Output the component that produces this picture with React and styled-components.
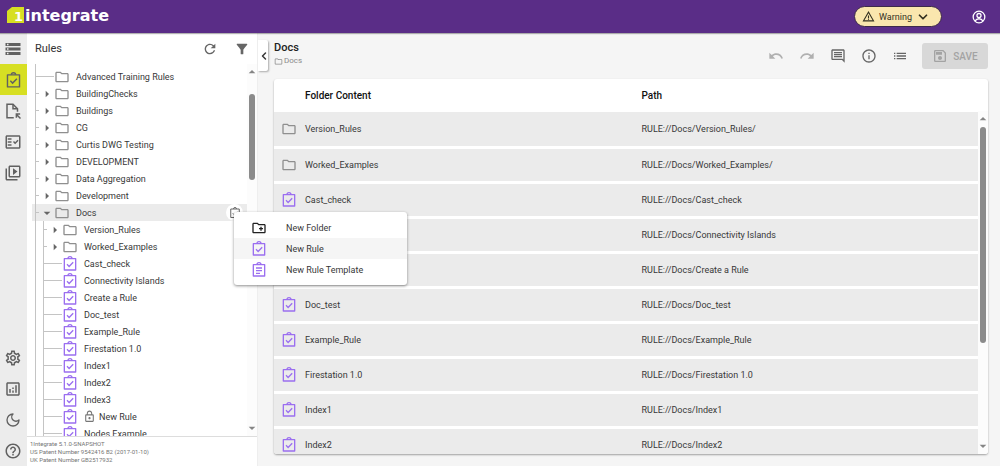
import React from 'react';
import styled, { createGlobalStyle } from 'styled-components';
import {
  MdStorage,
  MdOutlineFactCheck,
  MdOutlineVideoLibrary,
  MdOutlineSettings,
  MdOutlineAnalytics,
  MdHelpOutline,
  MdRefresh,
  MdFilterAlt,
  MdOutlineFolder,
  MdOutlineLock,
  MdOutlineCreateNewFolder,
  MdUndo,
  MdRedo,
  MdOutlineComment,
  MdInfoOutline,
  MdList,
  MdOutlineSave,
  MdWarningAmber,
  MdArrowRight,
  MdArrowDropDown,
  MdArrowDropUp,
} from 'react-icons/md';
import { LuMoon, LuChevronDown, LuChevronLeft } from 'react-icons/lu';

const tree = [
  { name: 'Advanced Training Rules', kind: 'folder', leaf: true },
  { name: 'BuildingChecks', kind: 'folder' },
  { name: 'Buildings', kind: 'folder' },
  { name: 'CG', kind: 'folder' },
  { name: 'Curtis DWG Testing', kind: 'folder' },
  { name: 'DEVELOPMENT', kind: 'folder' },
  { name: 'Data Aggregation', kind: 'folder' },
  { name: 'Development', kind: 'folder' },
  { name: 'Docs', kind: 'folder', open: true },
  { name: 'Version_Rules', kind: 'folder', nested: true },
  { name: 'Worked_Examples', kind: 'folder', nested: true },
  { name: 'Cast_check', kind: 'rule', nested: true },
  { name: 'Connectivity Islands', kind: 'rule', nested: true },
  { name: 'Create a Rule', kind: 'rule', nested: true },
  { name: 'Doc_test', kind: 'rule', nested: true },
  { name: 'Example_Rule', kind: 'rule', nested: true },
  { name: 'Firestation 1.0', kind: 'rule', nested: true },
  { name: 'Index1', kind: 'rule', nested: true },
  { name: 'Index2', kind: 'rule', nested: true },
  { name: 'Index3', kind: 'rule', nested: true },
  { name: 'New Rule', kind: 'rule', nested: true, locked: true },
  { name: 'Nodes Example', kind: 'rule', nested: true },
];

const content = [
  { name: 'Version_Rules', kind: 'folder', path: 'RULE://Docs/Version_Rules/' },
  { name: 'Worked_Examples', kind: 'folder', path: 'RULE://Docs/Worked_Examples/' },
  { name: 'Cast_check', kind: 'rule', path: 'RULE://Docs/Cast_check' },
  { name: 'Connectivity Islands', kind: 'rule', path: 'RULE://Docs/Connectivity Islands', covered: true },
  { name: 'Create a Rule', kind: 'rule', path: 'RULE://Docs/Create a Rule', covered: true },
  { name: 'Doc_test', kind: 'rule', path: 'RULE://Docs/Doc_test' },
  { name: 'Example_Rule', kind: 'rule', path: 'RULE://Docs/Example_Rule' },
  { name: 'Firestation 1.0', kind: 'rule', path: 'RULE://Docs/Firestation 1.0' },
  { name: 'Index1', kind: 'rule', path: 'RULE://Docs/Index1' },
  { name: 'Index2', kind: 'rule', path: 'RULE://Docs/Index2' },
];

function ClipboardIcon({ size = 16, color = 'currentColor', lines }) {
  return (
    <svg width={size} height={size} viewBox="0 0 24 24" fill="none" stroke={color} strokeWidth="2">
      <path d="M3.500 4h17v17h-17z" strokeLinejoin="round" />
      <path d="M9 4a3 3 0 0 1 6 0" />
      {lines ? <path d="M7.500 9h9M7.500 13h9M7.500 17h6" /> : <path d="M7.500 12.500l3.200 3.200L16.800 9.500" />}
    </svg>
  );
}

function KindIcon({ kind }) {
  return kind === 'folder' ? <MdOutlineFolder size={16} color="#8f8f8f" /> : <ClipboardIcon color="#9b6ff0" />;
}

function PageExportIcon() {
  return (
    <svg width="18" height="18" viewBox="0 0 24 24" fill="none" stroke="currentColor" strokeWidth="2">
      <path d="M13 21H4V3h8l6 6v4" />
      <path d="M12 3v6h6" />
      <path d="M22 22l-5-5M16.500 21v-5h5" />
    </svg>
  );
}

function Logo() {
  return (
    <Brand href="#" aria-label="1integrate home">
      <svg width="106" height="22" viewBox="0 0 106 22">
        <path d="M5 1h12v16H0V5z" fill="#d7df23" />
        <LogoText x="7" y="15" $size={13}>1</LogoText>
        <LogoText x="18" y="15" $size={16}>integrate</LogoText>
      </svg>
    </Brand>
  );
}

function Menu() {
  return (
    <MenuPanel role="menu">
      <MenuItem role="menuitem"><MdOutlineCreateNewFolder size={16} color="#222" />New Folder</MenuItem>
      <MenuItem role="menuitem" $hover><ClipboardIcon color="#9b6ff0" />New Rule</MenuItem>
      <MenuItem role="menuitem"><ClipboardIcon color="#9b6ff0" lines />New Rule Template</MenuItem>
    </MenuPanel>
  );
}

function App() {
  return (
    <Page>
      <GlobalStyle />
      <Header>
        <Logo />
        <WarningButton>
          <MdWarningAmber size={13} />
          Warning
          <LuChevronDown size={14} strokeWidth={3} />
        </WarningButton>
        <AccountButton aria-label="Account">
          <svg width="14" height="14" viewBox="0 0 24 24" fill="none" stroke="currentColor" strokeWidth="2.200">
            <circle cx="12" cy="12" r="10" />
            <circle cx="12" cy="9.500" r="3.500" />
            <path d="M5 19c2-3 4.500-4 7-4s5 1 7 4" />
          </svg>
        </AccountButton>
      </Header>

      <Body>
        <Rail>
          <RailButton aria-label="Data stores"><MdStorage size={18} /></RailButton>
          <RailButton aria-label="Rules" $active><ClipboardIcon size={17} /></RailButton>
          <RailButton aria-label="Actions"><PageExportIcon /></RailButton>
          <RailButton aria-label="Action maps"><MdOutlineFactCheck size={18} /></RailButton>
          <RailButton aria-label="Sessions"><MdOutlineVideoLibrary size={18} /></RailButton>
          <Spacer />
          <RailButton aria-label="Settings"><MdOutlineSettings size={18} /></RailButton>
          <RailButton aria-label="Reports"><MdOutlineAnalytics size={18} /></RailButton>
          <RailButton aria-label="Dark mode"><LuMoon size={16} /></RailButton>
          <RailButton aria-label="Help"><MdHelpOutline size={18} /></RailButton>
        </Rail>

        <Sidebar>
          <SidebarHead>
            <SidebarTitle>Rules</SidebarTitle>
            <button aria-label="Refresh"><MdRefresh size={16} /></button>
            <button aria-label="Filter"><MdFilterAlt size={16} /></button>
          </SidebarHead>
          <TreeArea>
            <Tree>
              {tree.map((item) => (
                <TreeRow key={item.name} $nested={item.nested} $selected={item.open}>
                  <Branch $long={item.leaf || item.kind === 'rule'} />
                  {item.kind === 'folder' && !item.leaf && (
                    <Arrow>{item.open ? <MdArrowDropDown size={16} /> : <MdArrowRight size={16} />}</Arrow>
                  )}
                  <KindIcon kind={item.kind} />
                  {item.locked && <Lock><MdOutlineLock size={13} /></Lock>}
                  <TreeLabel $locked={item.locked}>{item.name}</TreeLabel>
                  {item.open && (
                    <MenuAnchor>
                      <RoundButton aria-label="New item"><ClipboardIcon size={12} /></RoundButton>
                      <Menu />
                    </MenuAnchor>
                  )}
                </TreeRow>
              ))}
            </Tree>
            <ScrollTrack>
              <MdArrowDropUp size={16} />
              <ScrollThumb $start={14} $size={86} />
              <MdArrowDropDown size={16} />
            </ScrollTrack>
          </TreeArea>
          <Version>
            1Integrate 5.1.0-SNAPSHOT<br />
            US Patent Number 9542416 B2 (2017-01-10)<br />
            UK Patent Number GB2517932
          </Version>
        </Sidebar>

        <Main>
          <Collapse aria-label="Collapse panel"><LuChevronLeft size={12} strokeWidth={3} /></Collapse>
          <Toolbar>
            <Heading>
              <Title>Docs</Title>
              <Crumb><MdOutlineFolder size={9} />Docs</Crumb>
            </Heading>
            <ToolButton aria-label="Undo" disabled><MdUndo size={16} /></ToolButton>
            <ToolButton aria-label="Redo" disabled><MdRedo size={16} /></ToolButton>
            <ToolButton aria-label="Comments"><MdOutlineComment size={16} /></ToolButton>
            <ToolButton aria-label="Information"><MdInfoOutline size={16} /></ToolButton>
            <ToolButton aria-label="List"><MdList size={16} /></ToolButton>
            <SaveButton disabled><MdOutlineSave size={16} />SAVE</SaveButton>
          </Toolbar>
          <Card>
            <TableClip>
              <Table>
                <thead>
                  <tr>
                    <HeadCell $icon aria-label="Type" />
                    <HeadCell>Folder Content</HeadCell>
                    <HeadCell>Path</HeadCell>
                  </tr>
                </thead>
                <tbody>
                  {content.map((row) => (
                    <tr key={row.name}>
                      <Cell $icon><KindIcon kind={row.kind} /></Cell>
                      <Cell>{!row.covered && row.name}</Cell>
                      <Cell>{row.path}</Cell>
                    </tr>
                  ))}
                </tbody>
              </Table>
            </TableClip>
            <CardTrack>
              <MdArrowDropUp size={16} />
              <ScrollThumb $start={0} $size={216} />
              <MdArrowDropDown size={16} />
            </CardTrack>
          </Card>
        </Main>
      </Body>
    </Page>
  );
}

const GlobalStyle = createGlobalStyle`
  * { box-sizing: border-box; }
  body {
    margin: 0;
    font-family: Roboto, sans-serif;
    font-size: 9px;
    color: #383838;
    background: #f5f5f5;
  }
  button {
    font: inherit;
    color: inherit;
    border: 0;
    padding: 0;
    background: none;
    cursor: pointer;
  }
  svg { flex-shrink: 0; display: block; }
`;

const Page = styled.div`
  display: flex;
  flex-direction: column;
  height: 100vh;
  overflow: hidden;
`;

const Header = styled.header`
  position: relative;
  display: flex;
  align-items: center;
  height: 33px;
  flex-shrink: 0;
  padding: 0 14px 0 7px;
  background: #5a2d87;
  color: #fff;
  box-shadow: 0 1px 1px rgba(0, 0, 0, 0.3);
  z-index: 2;
`;

const Brand = styled.a`
  margin-right: auto;
`;

const LogoText = styled.text`
  font-family: 'DejaVu Sans', sans-serif;
  font-size: ${(p) => p.$size}px;
  font-weight: 700;
  fill: #fff;
`;

const WarningButton = styled.button`
  display: flex;
  align-items: center;
  gap: 4px;
  height: 21px;
  padding: 0 11px 0 7px;
  border: 1px solid #3d2a4a;
  border-radius: 11px;
  background: #fae6ae;
  color: #33301f;
`;

const AccountButton = styled.button`
  margin-left: 30px;
`;

const Body = styled.div`
  display: flex;
  flex: 1;
  min-height: 0;
`;

const Rail = styled.nav`
  display: flex;
  flex-direction: column;
  width: 27px;
  flex-shrink: 0;
  background: #ececec;
  color: #616161;
`;

const RailButton = styled.button`
  display: grid;
  place-items: center;
  height: 31px;
  padding: 1px 1px 0 0;
  background: ${(p) => (p.$active ? '#d7df23' : 'none')};
`;

const Spacer = styled.div`
  flex: 1;
`;

const Sidebar = styled.aside`
  position: relative;
  display: flex;
  flex-direction: column;
  width: 231px;
  flex-shrink: 0;
  background: #fff;
  border-right: 1px solid #eee;
  z-index: 1;
`;

const SidebarHead = styled.div`
  display: flex;
  align-items: center;
  gap: 16px;
  height: 31px;
  flex-shrink: 0;
  padding: 0 7px 0 8px;
  color: #666;
`;

const SidebarTitle = styled.h2`
  flex: 1;
  margin: 0;
  font-size: 11px;
  font-weight: 400;
  color: #333;
`;

const TreeArea = styled.div`
  display: flex;
  flex: 1;
  min-height: 0;
`;

const Tree = styled.ul`
  flex: 1;
  margin: 0;
  padding: 4px 0 0 5px;
  list-style: none;
  max-height: 100%;
  min-width: 0;
  clip-path: inset(0 -300px 0 0);
  background: linear-gradient(#c4c4c4, #c4c4c4) 8px 0 / 1px 100% no-repeat;
`;

const TreeRow = styled.li`
  display: flex;
  align-items: center;
  height: 17px;
  padding: 0 4px 0 ${(p) => (p.$nested ? 11 : 3)}px;
  background-color: ${(p) => (p.$selected ? '#ebebeb' : 'transparent')};
  background-image: linear-gradient(#c4c4c4, #c4c4c4);
  background-repeat: no-repeat;
  background-size: 1px 100%;
  background-position: ${(p) => (p.$nested ? 11 : 3)}px 0;
`;

const Branch = styled.span`
  width: ${(p) => (p.$long ? 19 : 4)}px;
  height: 1px;
  background: #c4c4c4;
`;

const Arrow = styled.span`
  display: grid;
  place-items: center;
  width: 15px;
  color: #666;
`;

const Lock = styled.span`
  margin-left: 5px;
  color: #777;
`;

const TreeLabel = styled.span`
  padding-left: ${(p) => (p.$locked ? 3 : 6)}px;
`;

const MenuAnchor = styled.span`
  position: relative;
  margin-left: auto;
  z-index: 3;
`;

const RoundButton = styled.button`
  display: grid;
  place-items: center;
  width: 17px;
  height: 17px;
  border-radius: 50%;
  background: #fff;
  color: #666;
`;

const MenuPanel = styled.div`
  position: absolute;
  top: 8px;
  left: 8px;
  width: 173px;
  padding: 5px 0;
  background: #fff;
  border-radius: 3px;
  box-shadow: 0 1px 3px rgba(0, 0, 0, 0.45);
`;

const MenuItem = styled.button`
  display: grid;
  grid-template-columns: 35px 1fr;
  align-items: center;
  width: 100%;
  height: 21px;
  padding-left: 17px;
  text-align: left;
  background: ${(p) => (p.$hover ? '#f5f5f5' : 'none')};
`;

const ScrollTrack = styled.div`
  display: flex;
  flex-direction: column;
  align-items: center;
  width: 10px;
  color: #858585;
  background: #fcfcfc;
  overflow: hidden;
`;

const ScrollThumb = styled.div`
  width: 6px;
  height: ${(p) => p.$size}px;
  flex-shrink: 0;
  margin: ${(p) => p.$start}px 0 auto;
  border-radius: 3px;
  background: #8b8b8b;
`;

const Version = styled.footer`
  flex-shrink: 0;
  height: 30px;
  padding: 3px 3px 0;
  border-top: 1px solid #ddd;
  font-size: 6px;
  line-height: 8px;
  color: #757575;
`;

const Main = styled.main`
  position: relative;
  display: flex;
  flex-direction: column;
  flex: 1;
  min-width: 0;
  padding: 5px 12px 12px 16px;
`;

const Collapse = styled.button`
  position: absolute;
  top: 7px;
  left: 0;
  display: grid;
  place-items: center;
  width: 10px;
  height: 31px;
  background: #fff;
  border-radius: 0 2px 2px 0;
  box-shadow: 1px 1px 2px rgba(0, 0, 0, 0.3);
`;

const Toolbar = styled.div`
  display: flex;
  align-items: center;
  height: 36px;
  margin-bottom: 5px;
`;

const Heading = styled.div`
  flex: 1;
  align-self: flex-start;
  padding-top: 3px;
`;

const Title = styled.h1`
  margin: 0;
  font-size: 11px;
  line-height: 14px;
  font-weight: 500;
  color: #222;
`;

const Crumb = styled.div`
  display: flex;
  align-items: center;
  gap: 1px;
  font-size: 8px;
  line-height: 12px;
  color: #8a8a8a;
`;

const ToolButton = styled.button`
  display: grid;
  place-items: center;
  width: 31px;
  height: 26px;
  color: ${(p) => (p.disabled ? '#b0b0b0' : '#666')};
`;

const SaveButton = styled.button`
  display: flex;
  align-items: center;
  justify-content: center;
  gap: 5px;
  width: 66px;
  height: 26px;
  margin-left: 7px;
  border-radius: 3px;
  background: #d8d8d8;
  color: #a3a3a3;
  font-size: 10px;
  font-weight: 500;
`;

const Card = styled.section`
  display: flex;
  flex: 1;
  min-height: 0;
  background: #fff;
  border-radius: 3px;
  box-shadow: 0 1px 2px rgba(0, 0, 0, 0.35);
  overflow: hidden;
`;

const TableClip = styled.div`
  flex: 1;
  overflow: hidden;
`;

const Table = styled.table`
  width: 100%;
  table-layout: fixed;
  border-collapse: collapse;
`;

const HeadCell = styled.th`
  width: ${(p) => (p.$icon ? '31px' : 'auto')};
  height: 33px;
  padding: 0;
  text-align: left;
  font-size: 10px;
  font-weight: 500;
  color: #111;
`;

const Cell = styled.td`
  height: 35px;
  padding: ${(p) => (p.$icon ? '0 0 0 7px' : '0')};
  background: #ebebeb;
  border-bottom: 3px solid #fff;
`;

const CardTrack = styled(ScrollTrack)`
  margin-top: 32px;
`;

export default App;
